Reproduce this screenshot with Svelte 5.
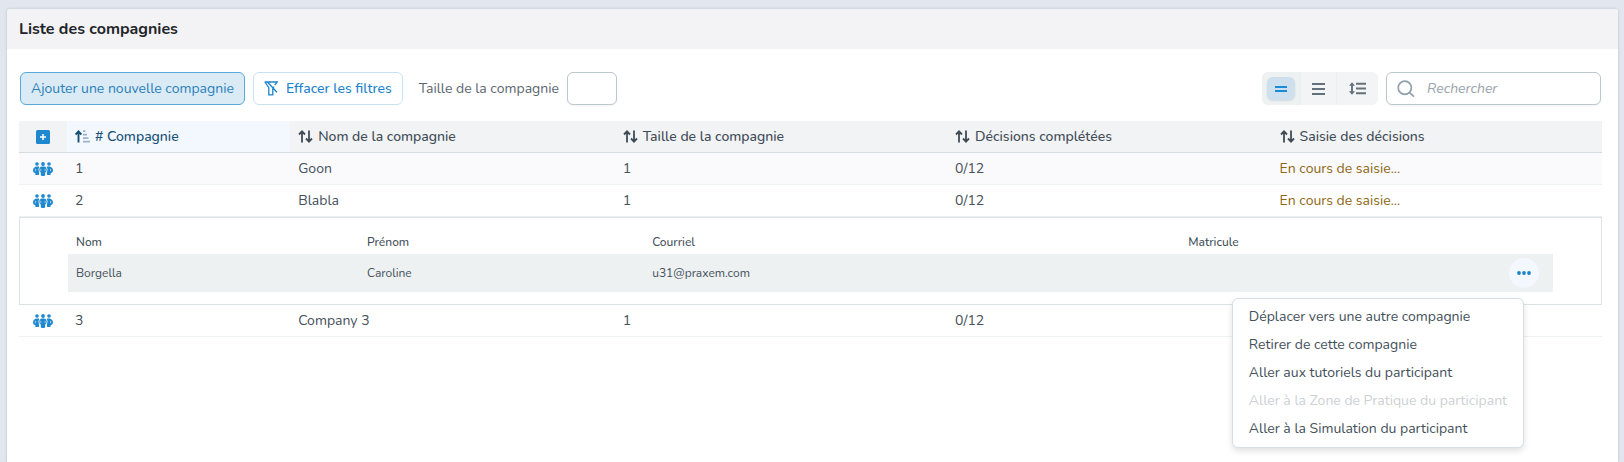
<script lang="ts">
  interface Member {
    lastName: string;
    firstName: string;
    email: string;
    matricule: string;
  }

  interface Company {
    id: number;
    name: string;
    size: number;
    decisions: string;
    status: string;
    members: Member[];
  }

  const companies: Company[] = [
    {
      id: 1,
      name: 'Goon',
      size: 1,
      decisions: '0/12',
      status: 'En cours de saisie...',
      members: [],
    },
    {
      id: 2,
      name: 'Blabla',
      size: 1,
      decisions: '0/12',
      status: 'En cours de saisie...',
      members: [
        { lastName: 'Borgella', firstName: 'Caroline', email: 'u31@praxem.com', matricule: '' },
      ],
    },
    {
      id: 3,
      name: 'Company 3',
      size: 1,
      decisions: '0/12',
      status: '',
      members: [],
    },
  ];

  const sortableColumns = [
    'Nom de la compagnie',
    'Taille de la compagnie',
    'Décisions complétées',
    'Saisie des décisions',
  ];

  const menuItems = [
    { label: 'Déplacer vers une autre compagnie', disabled: false },
    { label: 'Retirer de cette compagnie', disabled: false },
    { label: 'Aller aux tutoriels du participant', disabled: false },
    { label: 'Aller à la Zone de Pratique du participant', disabled: true },
    { label: 'Aller à la Simulation du participant', disabled: false },
  ];

  let expandedId = $state<number | null>(2);
  let menuOpen = $state(true);
  let density = $state('compact');
  let search = $state('');
  let companySize = $state('');

  function toggleCompany(id: number) {
    expandedId = expandedId === id ? null : id;
  }

  function clearFilters() {
    search = '';
    companySize = '';
  }
</script>

<section class="panel">
  <header class="panel-header">
    <h1>Liste des compagnies</h1>
  </header>

  <div class="panel-body">
    <div class="toolbar">
      <button type="button" class="btn btn-primary">Ajouter une nouvelle compagnie</button>
      <button type="button" class="btn btn-outline" onclick={clearFilters}>
        <svg width="14" height="15" viewBox="0 0 14 15" fill="none" stroke="currentColor" stroke-width="1.3">
          <path d="M3.4 1H13.2L10.8 4.2M1 1L4.8 6.6V13.8H8.8V7.4M0.6 1H3.4L13 11.2M8.8 7.4L10 5.6" />
        </svg>
        Effacer les filtres
      </button>
      <label class="size-label" for="company-size">Taille de la compagnie</label>
      <input id="company-size" class="size-input" type="text" bind:value={companySize} />

      <div class="density" role="group" aria-label="Densité">
        <button
          type="button"
          class:active={density === 'compact'}
          aria-label="Compact"
          onclick={() => (density = 'compact')}
        >
          <span class="pill">
            <svg width="12" height="8" viewBox="0 0 12 8" stroke="currentColor" stroke-width="1.8">
              <path d="M0 2H12M0 6H12" />
            </svg>
          </span>
        </button>
        <button
          type="button"
          class:active={density === 'normal'}
          aria-label="Normal"
          onclick={() => (density = 'normal')}
        >
          <span class="pill">
            <svg width="13" height="12" viewBox="0 0 13 12" stroke="currentColor" stroke-width="1.9">
              <path d="M0 1H13M0 6H13M0 11H13" />
            </svg>
          </span>
        </button>
        <button
          type="button"
          class:active={density === 'large'}
          aria-label="Large"
          onclick={() => (density = 'large')}
        >
          <span class="pill">
            <svg width="17" height="13" viewBox="0 0 17 13" fill="none" stroke="currentColor" stroke-width="1.9">
              <path d="M7 1.7H17M7 6.5H17M7 11.3H17M3 2V11" />
              <path d="M3 0.2L6 3.8H0ZM3 12.8L0 9.2H6Z" fill="currentColor" stroke="none" />
            </svg>
          </span>
        </button>
      </div>

      <div class="search">
        <svg width="18" height="18" viewBox="0 0 18 18" fill="none" stroke="currentColor" stroke-width="1.7">
          <circle cx="7.8" cy="7.8" r="6.6" />
          <path d="M12.6 12.6L17 16.6" />
        </svg>
        <input type="text" placeholder="Rechercher" aria-label="Rechercher" bind:value={search} />
      </div>
    </div>

    <table class="companies">
      <colgroup>
        <col class="col-toggle" />
        <col class="col-id" />
        <col class="col-name" />
        <col class="col-size" />
        <col class="col-decisions" />
        <col />
      </colgroup>
      <thead>
        <tr>
          <th class="toggle-cell">
            <button type="button" class="icon-btn" aria-label="Tout ouvrir">
              <svg width="14" height="14" viewBox="0 0 14 14">
                <rect width="14" height="14" rx="1.5" fill="currentColor" />
                <path d="M7 4V10M4 7H10" stroke="#fff" stroke-width="1.5" />
              </svg>
            </button>
          </th>
          <th class="sorted" aria-sort="ascending">
            <button type="button" class="sort-btn">
              <svg width="15" height="13" viewBox="0 0 15 13" fill="none" stroke="currentColor">
                <path d="M3.5 12.5V1.5M0.6 4.5L3.5 1.4L6.4 4.5" stroke-width="1.9" />
                <path d="M8 1.2H10.5M8 4.7H12M8 8.2H13.5M8 11.7H15" stroke-width="1.7" opacity="0.4" />
              </svg>
              # Compagnie
            </button>
          </th>
          {#each sortableColumns as column}
            <th>
              <button type="button" class="sort-btn">
                <svg width="15" height="13" viewBox="0 0 15 13" fill="none" stroke="currentColor" stroke-width="1.8">
                  <path d="M4 12.5V1.5M1 4.5L4 1.4L7 4.5M11 0.5V11.5M8 8.5L11 11.6L14 8.5" />
                </svg>
                {column}
              </button>
            </th>
          {/each}
        </tr>
      </thead>
      <tbody>
        {#each companies as company, i (company.id)}
          <tr class="company" class:striped={i === 0}>
            <td class="toggle-cell">
              <button
                type="button"
                class="icon-btn"
                aria-label="Membres de {company.name}"
                aria-expanded={expandedId === company.id}
                onclick={() => toggleCompany(company.id)}
              >
                <svg width="20" height="14" viewBox="0 0 20 14" fill="currentColor">
                  <circle cx="4" cy="2" r="1.8" />
                  <circle cx="10" cy="2" r="1.9" />
                  <circle cx="16" cy="2" r="1.8" />
                  <path d="M4 4.6H5.5C5.9 4.6 6.2 4.8 6.4 5.1C5.4 6.2 5.1 8.6 6.1 10.2V12C6.1 12.6 5.7 13 5.1 13H3.3C2.7 13 2.3 12.6 2.3 12V11.2C0.9 10.7 0 9.8 0 8.5C0 6.3 1.6 4.6 4 4.6Z" />
                  <path d="M16 4.6H14.5C14.1 4.6 13.8 4.8 13.6 5.1C14.6 6.2 14.9 8.6 13.9 10.2V12C13.9 12.6 14.3 13 14.9 13H16.7C17.3 13 17.7 12.6 17.7 12V11.2C19.1 10.7 20 9.8 20 8.5C20 6.3 18.4 4.6 16 4.6Z" />
                  <path d="M8.9 4.6H11.1C12.7 4.6 13.7 6 13.7 7.7C13.7 9 13.1 9.9 12.2 10.4V12.8C12.2 13.5 11.8 14 11.1 14H8.9C8.2 14 7.8 13.5 7.8 12.8V10.4C6.9 9.9 6.3 9 6.3 7.7C6.3 6 7.3 4.6 8.9 4.6Z" />
                  <path d="M2.4 6.8V9.2M7.8 6.8V9.2M12.2 6.8V9.2M17.6 6.8V9.2" stroke="#fff" stroke-width="0.6" />
                </svg>
              </button>
            </td>
            <td>{company.id}</td>
            <td>{company.name}</td>
            <td>{company.size}</td>
            <td>{company.decisions}</td>
            <td class="status">{company.status}</td>
          </tr>
          {#if expandedId === company.id}
            <tr>
              <td class="details" colspan="6">
                <table class="members">
                  <colgroup>
                    <col class="col-lastname" />
                    <col class="col-firstname" />
                    <col class="col-email" />
                    <col />
                    <col class="col-actions" />
                  </colgroup>
                  <thead>
                    <tr>
                      <th>Nom</th>
                      <th>Prénom</th>
                      <th>Courriel</th>
                      <th>Matricule</th>
                      <th></th>
                    </tr>
                  </thead>
                  <tbody>
                    {#each company.members as member}
                      <tr>
                        <td>{member.lastName}</td>
                        <td>{member.firstName}</td>
                        <td>{member.email}</td>
                        <td>{member.matricule}</td>
                        <td class="actions-cell">
                          <div class="actions">
                            <button
                              type="button"
                              class="more-btn"
                              aria-label="Actions"
                              aria-expanded={menuOpen}
                              onclick={() => (menuOpen = !menuOpen)}
                            >
                              <svg width="14" height="4" viewBox="0 0 14 4" fill="currentColor">
                                <circle cx="2" cy="2" r="1.9" />
                                <circle cx="7" cy="2" r="1.9" />
                                <circle cx="12" cy="2" r="1.9" />
                              </svg>
                            </button>
                            {#if menuOpen}
                              <div class="menu" role="menu">
                                {#each menuItems as item}
                                  <button type="button" role="menuitem" disabled={item.disabled}>
                                    {item.label}
                                  </button>
                                {/each}
                              </div>
                            {/if}
                          </div>
                        </td>
                      </tr>
                    {/each}
                  </tbody>
                </table>
              </td>
            </tr>
          {/if}
        {/each}
      </tbody>
    </table>
  </div>
</section>

<style>
  :global(body) {
    background: #e2e7ef;
  }

  .panel,
  .panel button,
  .panel input {
    font-family: Nunito, Lato, 'Open Sans', sans-serif;
    font-size: 14px;
    line-height: 20px;
  }

  .panel {
    box-sizing: border-box;
    min-height: calc(100vh - 9px);
    margin: 9px 6px 0 7px;
    border-radius: 3px 3px 0 0;
    background: #fff;
    box-shadow: 0 0 3px rgba(60, 70, 90, 0.25);
    color: #44505a;
    overflow: hidden;
  }

  .panel-header {
    padding: 10px 12px;
    background: #f3f3f5;
  }

  h1 {
    margin: 0;
    color: #212529;
    font-size: 16px;
    font-weight: 700;
    line-height: 20px;
  }

  .panel-body {
    padding: 23px 16px 0 12px;
  }

  button {
    cursor: pointer;
  }

  .toolbar {
    display: flex;
    align-items: center;
    gap: 8px;
    margin-bottom: 16px;
    padding: 0 1px;
  }

  .btn {
    display: flex;
    align-items: center;
    gap: 8px;
    height: 33px;
    padding: 0 10px;
    border: 1px solid #58a9dd;
    border-radius: 6px;
    color: #1c84cc;
    white-space: nowrap;
  }

  .btn-primary {
    background: #dbebf6;
    color: #2a80b9;
  }

  .btn-outline {
    border-color: #c8e2f4;
    background: #fff;
    font-weight: 500;
  }

  .size-label {
    margin-left: 8px;
    color: #5b6670;
    white-space: nowrap;
  }

  .size-input,
  .search {
    box-sizing: border-box;
    height: 33px;
    border: 1px solid #bcc7ce;
    border-radius: 6px;
    background: #fff;
    box-shadow: 0 1px 2px rgba(0, 0, 0, 0.05);
  }

  .size-input {
    width: 50px;
    padding: 0 8px;
    color: inherit;
  }

  .density {
    display: grid;
    grid-template-columns: 38px 36px 42px;
    margin-left: auto;
    border-radius: 6px;
    background: #f2f4f5;
    overflow: hidden;
  }

  .density button {
    display: flex;
    align-items: center;
    justify-content: center;
    height: 33px;
    padding: 0;
    border: 0;
    border-left: 1px solid #ebeef0;
    background: none;
    color: #64707c;
  }

  .density button:first-child {
    border-left: 0;
  }

  .density button.active {
    background: #edf1f2;
    color: #1c8ad4;
  }

  .pill {
    display: flex;
    align-items: center;
    justify-content: center;
    width: 28px;
    height: 23px;
    border-radius: 6px;
  }

  .active .pill {
    background: #cee0ed;
    box-shadow: 0 1px 2px rgba(0, 0, 0, 0.1);
  }

  .search {
    display: flex;
    align-items: center;
    gap: 12px;
    width: 215px;
    padding: 0 10px;
    color: #8fa0aa;
  }

  .search svg {
    flex-shrink: 0;
  }

  .search input {
    flex: 1;
    min-width: 0;
    padding: 0;
    border: 0;
    outline: 0;
    background: none;
    color: #44505a;
  }

  .search input::placeholder {
    color: #9aa3ac;
    font-style: italic;
    opacity: 1;
  }

  table {
    width: 100%;
    border-collapse: separate;
    border-spacing: 0;
    table-layout: fixed;
  }

  th,
  td {
    box-sizing: border-box;
    padding: 0 8px;
    text-align: left;
    white-space: nowrap;
  }

  .col-toggle {
    width: 48px;
  }

  .col-id {
    width: 14.1%;
  }

  .col-name {
    width: 20.5%;
  }

  .col-size {
    width: 21%;
  }

  .col-decisions {
    width: 20.5%;
  }

  .companies > thead th {
    height: 32px;
    border-bottom: 1px solid #d5dbde;
    background: #f2f3f5;
    color: #3f4b55;
    font-weight: 500;
  }

  .companies > thead th.sorted {
    background: #f2f8fd;
    color: #174f77;
  }

  .sort-btn {
    display: flex;
    align-items: center;
    gap: 5px;
    padding: 0;
    border: 0;
    background: none;
    color: inherit;
    font-weight: inherit;
  }

  .company td {
    height: 32px;
    border-bottom: 1px solid #eef1f2;
  }

  .striped td {
    background: #fafafc;
  }

  .toggle-cell {
    text-align: center;
  }

  .icon-btn {
    display: flex;
    margin: 0 auto;
    padding: 0;
    border: 0;
    background: none;
    color: #1f88ce;
  }

  .company .status {
    color: #8d6712;
  }

  .details {
    padding: 12px 48px;
    border: 1px solid #dbe2e4;
  }

  .members th,
  .members td {
    font-size: 12px;
  }

  .members th {
    height: 24px;
    font-weight: 500;
  }

  .members td {
    height: 38px;
    background: #edf1f2;
  }

  .col-lastname {
    width: 19.6%;
  }

  .col-firstname {
    width: 19.2%;
  }

  .col-email {
    width: 36.1%;
  }

  .col-actions {
    width: 60px;
  }

  .members .actions-cell {
    padding: 0 14px;
  }

  .actions {
    position: relative;
    display: flex;
    justify-content: flex-end;
  }

  .more-btn {
    display: flex;
    align-items: center;
    justify-content: center;
    width: 30px;
    height: 30px;
    padding: 0;
    border: 0;
    border-radius: 50%;
    background: #f3f8fe;
    color: #1c84cc;
  }

  .menu {
    position: absolute;
    top: 40px;
    right: 15px;
    z-index: 1;
    padding: 4px 0;
    border: 1px solid #d8dfe3;
    border-radius: 6px;
    background: #fff;
    box-shadow: 0 3px 6px rgba(0, 0, 0, 0.12);
  }

  .menu button {
    display: block;
    width: 100%;
    height: 28px;
    padding: 0 16px;
    border: 0;
    background: none;
    color: #44505a;
    text-align: left;
  }

  .menu button:disabled {
    color: #cdd1d4;
    cursor: default;
  }

  .menu button:not(:disabled):hover {
    background: #f2f4f5;
  }
</style>
